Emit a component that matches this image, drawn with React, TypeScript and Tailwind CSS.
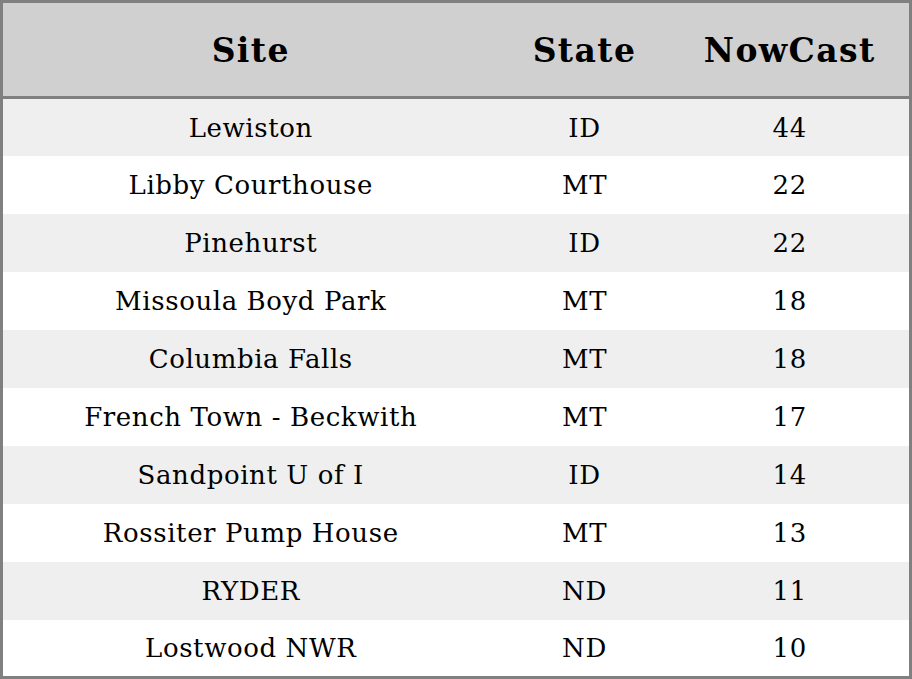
import React from 'react';

const rows = [
    { site: 'Lewiston', state: 'ID', nowcast: 44 },
    { site: 'Libby Courthouse', state: 'MT', nowcast: 22 },
    { site: 'Pinehurst', state: 'ID', nowcast: 22 },
    { site: 'Missoula Boyd Park', state: 'MT', nowcast: 18 },
    { site: 'Columbia Falls', state: 'MT', nowcast: 18 },
    { site: 'French Town - Beckwith', state: 'MT', nowcast: 17 },
    { site: 'Sandpoint U of I', state: 'ID', nowcast: 14 },
    { site: 'Rossiter Pump House', state: 'MT', nowcast: 13 },
    { site: 'RYDER', state: 'ND', nowcast: 11 },
    { site: 'Lostwood NWR', state: 'ND', nowcast: 10 },
];

const App: React.FC = () => {
    return (
        <div className="w-[912px] h-[679px] bg-white font-['DejaVu_Serif',serif] text-black">
            <table className="w-full h-full border-collapse border-[3px] border-[#808080] table-fixed">
                <thead>
                    <tr className="bg-[#d0d0d0] h-[96px] border-b-[3px] border-[#808080] text-[33px] tracking-[1.4px] font-bold">
                        <th className="w-[497px] text-center pt-[2px]">Site</th>
                        <th className="w-[172px] text-center pt-[2px]">State</th>
                        <th className="text-center pt-[2px]">NowCast</th>
                    </tr>
                </thead>
                <tbody className="text-[26px] tracking-[0.6px]">
                    {rows.map((row, i) => (
                        <tr key={row.site} className={`h-[57.7px] ${i % 2 === 0 ? 'bg-[#efefef]' : 'bg-white'}`}>
                            <td className="text-center pt-[2px]">{row.site}</td>
                            <td className="text-center pt-[2px]">{row.state}</td>
                            <td className="text-center pt-[2px]">{row.nowcast}</td>
                        </tr>
                    ))}
                </tbody>
            </table>
        </div>
    );
};

export default App;
